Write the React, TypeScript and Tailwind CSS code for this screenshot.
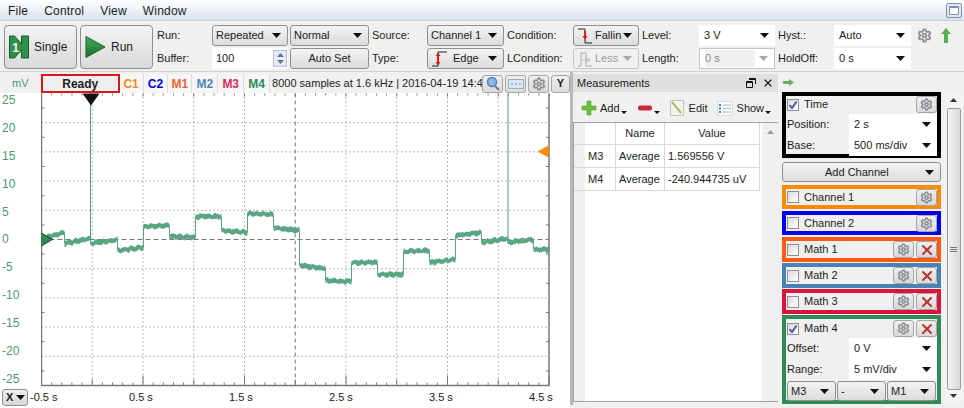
import { Settings, X as XIcon } from "lucide-react";
import type { ReactNode } from "react";

const font = "font-['Liberation_Sans',Arial,sans-serif]";

function Arrow({ light }: { light?: boolean }) {
  return (
    <svg width="9" height="5" viewBox="0 0 9 5" className="shrink-0">
      <path d="M0 0h9L4.5 5z" fill={light ? "#a8a8a8" : "#111"} />
    </svg>
  );
}

// raised windows style combo
function Combo({ children, className = "h-[21px]" }: { children: ReactNode; className?: string }) {
  return (
    <div className={`flex items-center justify-between rounded-[3px] border border-[#8e8f8f] bg-gradient-to-b from-[#f3f3f3] to-[#dcdcdc] pl-[2px] pr-[6px] ${className}`}>
      <span className="flex items-center gap-[2px] whitespace-nowrap pl-[1px]">{children}</span>
      <Arrow />
    </div>
  );
}

// flat editable combo
function Field({ children, disabled }: { children: ReactNode; disabled?: boolean }) {
  return (
    <div className={`flex h-[21px] items-center justify-between bg-white pl-[5px] pr-[6px] ${disabled ? "border border-[#c4c4c4] text-[#8a8a8a]" : ""}`}>
      <span className={disabled ? "h-[17px] w-[50px] bg-[#f0f0f0] leading-[17px]" : ""}>{children}</span>
      <Arrow light={disabled} />
    </div>
  );
}

function Labels({ a, b, w, className = "" }: { a: string; b: string; w: string; className?: string }) {
  return (
    <div className={`flex flex-col gap-[2px] ${w} ${className}`}>
      <div className="flex h-[21px] items-center">{a}</div>
      <div className="flex h-[21px] items-center">{b}</div>
    </div>
  );
}

function GearBtn() {
  return (
    <div className="flex h-[17px] w-[21px] items-center justify-center rounded-[3px] border border-[#a5a5a5] bg-gradient-to-b from-[#efefef] to-[#d8d8d8]">
      <Settings size={13} strokeWidth={3} className="text-[#8b9096]" />
    </div>
  );
}

function CloseBtn() {
  return (
    <div className="flex h-[17px] w-[21px] items-center justify-center rounded-[3px] border border-[#a5a5a5] bg-gradient-to-b from-[#efefef] to-[#d8d8d8]">
      <XIcon size={16} strokeWidth={3} className="text-[#b8342c]" />
    </div>
  );
}

function Check({ on }: { on?: boolean }) {
  return (
    <div className="flex h-[12px] w-[12px] shrink-0 items-center justify-center border border-[#8e8f8f] bg-gradient-to-br from-[#dcdcdc] to-white">
      {on && (
        <svg width="10" height="10" viewBox="0 0 10 10">
          <path d="M1.5 5l2.5 3L8.5 1.5" stroke="#3b4fa8" strokeWidth="1.8" fill="none" />
        </svg>
      )}
    </div>
  );
}

function ChannelBox({ name, color, close, className = "h-[24px]" }: { name: string; color: string; close?: boolean; className?: string }) {
  return (
    <div className={`flex items-center border-[4px] bg-[#f0f0f0] pl-[1px] ${color} ${className}`}>
      <Check />
      <span className="ml-[5px] grow">{name}</span>
      <GearBtn />
      {close && <span className="ml-[2px]"><CloseBtn /></span>}
    </div>
  );
}

function rng(seed: number) {
  let s = seed;
  return () => {
    s = (s * 16807) % 2147483647;
    return s / 2147483647;
  };
}

// x start, x end, y start, y end (in page px)
const levels = [
  [42, 64, 238, 232], [64, 90, 243, 238], [90, 117, 243, 239], [117, 143, 250, 247],
  [143, 169, 226, 225], [169, 195, 236, 237], [195, 221, 216, 216], [221, 247, 230, 232],
  [247, 273, 213, 214], [273, 299, 227, 230], [299, 325, 265, 268], [325, 351, 280, 281],
  [351, 377, 262, 262], [377, 403, 274, 274], [403, 429, 251, 250], [429, 455, 262, 259],
  [455, 481, 235, 232], [481, 507, 242, 238], [507, 533, 242, 239], [533, 549, 249, 249],
];

// noisy band for each level, joined by thin vertical steps
function traceBands() {
  const r = rng(4711);
  let bands = "";
  let steps = "";
  levels.forEach(([x0, x1, y0, y1], i) => {
    const top: string[] = [];
    const bottom: string[] = [];
    for (let x = x0; x <= x1; x += 1) {
      const y = y0 + ((y1 - y0) * (x - x0)) / (x1 - x0) + Math.sin(x * 0.9) * 0.6 - 93;
      top.push(`${x - 41} ${(y - 1.7 - r() * 1.6).toFixed(2)}`);
      bottom.unshift(`${x - 41} ${(y + 1.7 + r() * 1.6).toFixed(2)}`);
    }
    bands += `M${top.join("L")}L${bottom.join("L")}Z`;
    const next = levels[i + 1];
    if (next) steps += `M${x1 - 41} ${y1 - 93}V${next[2] - 93}`;
  });
  return { bands, steps };
}

function Plot() {
  const W = 507.5;
  const H = 292;
  const stepX = W / 10;
  const stepY = H / 10;
  const gridX = Array.from({ length: 9 }, (_, i) => (i + 1) * stepX);
  const gridY = Array.from({ length: 9 }, (_, i) => (i + 1) * stepY);
  const minor = Array.from({ length: 51 }, (_, i) => (i * W) / 50);
  const halfY = Array.from({ length: 10 }, (_, i) => (i + 0.5) * stepY);
  const { bands, steps } = traceBands();
  return (
    <svg width="510" height="294" viewBox="0 0 510 294" className="block">
      <g transform="translate(0.5 0.5)">
        {gridX.map((x, i) => (
          <line key={x} x1={x} x2={x} y1="0" y2={H} stroke="#777" strokeDasharray={i === 4 ? "4 3" : "1 3"} />
        ))}
        {gridY.map((y, i) => (
          <line key={y} x1="0" x2={W} y1={y} y2={y} stroke="#777" strokeDasharray={i === 4 ? "5 3" : "1 3"} />
        ))}
        {minor.map((x, i) => {
          const len = i % 10 === 0 ? 10 : i % 5 === 0 ? 6 : 3;
          return (
            <g key={x} stroke="#777">
              <line x1={x} x2={x} y1="0" y2={i % 5 === 0 ? 3 : 2} />
              <line x1={x} x2={x} y1={H} y2={H - len} />
            </g>
          );
        })}
        {halfY.map((y) => (
          <g key={y} stroke="#777">
            <line x1="0" x2="3" y1={y} y2={y} />
            <line x1={W} x2={W - 3} y1={y} y2={y} />
          </g>
        ))}
        <path d={`M0 0V${H}H${W}V0`} fill="none" stroke="#777" strokeWidth="1.5" />
        <path d={bands} fill="#5aa583" />
        <path d={steps} fill="none" stroke="#5aa583" strokeWidth="1" />
        <path d="M49 0V147M466.5 0V147" stroke="#4f9c7c" strokeWidth="1" fill="none" />
        <path d="M41 0h17l-8.5 12z" fill="#111" />
        <path d="M-1 139l12 7-12 7z" fill="#2e8b57" stroke="#111" strokeWidth="0.7" />
        <path d="M507 52l-11 6 11 6z" fill="#ff8c00" />
      </g>
    </svg>
  );
}

const tabs = [
  ["C1", "text-[#f08c1a]", "w-[24px]"],
  ["C2", "text-[#0000e0]", "w-[25px]"],
  ["M1", "text-[#f0642d]", "w-[24px]"],
  ["M2", "text-[#4e88b8]", "w-[26px]"],
  ["M3", "text-[#d62f58]", "w-[26px]"],
  ["M4", "text-[#2e8b57]", "w-[26px]"],
];

function TinyBtn({ children, w = "w-[21px]" }: { children: ReactNode; w?: string }) {
  return (
    <div className={`flex h-[18px] items-center justify-center rounded-[3px] border border-[#a5a5a5] bg-gradient-to-b from-[#f0f0f0] to-[#dadada] ${w}`}>
      {children}
    </div>
  );
}

const Caret = () => (
  <span className="ml-[1px] mt-[9px]">
    <svg width="6" height="3" className="block"><path d="M0 0h6L3 3z" fill="#111" /></svg>
  </span>
);

export default function App() {
  return (
    <div className={`flex h-[408px] w-[964px] flex-col overflow-hidden bg-[#f0f0f0] text-[11px] leading-none text-[#1c1c1c] ${font}`}>
      {/* menu */}
      <div className="flex h-[21px] items-center justify-between border-b border-[#c9cdd4] bg-gradient-to-b from-white to-[#d9e2f0] pl-[8px] pr-[2px] text-[12px] tracking-[0.2px]">
        <div className="flex gap-[16px] pt-[2px]">
          <span>File</span>
          <span>Control</span>
          <span>View</span>
          <span>Window</span>
        </div>
        <div className="flex h-[15px] w-[16px] items-start justify-center rounded-[2px] border border-[#7f93b0] bg-[#dfe8f4] p-[2px]">
          <div className="h-full w-full rounded-[1px] border border-t-[2px] border-[#7f93b0] bg-white" />
        </div>
      </div>

      {/* toolbar */}
      <div className="flex h-[51px] border-b border-[#d0d0d0] pl-[4px] pt-[4px]">
        <div className="flex h-[44px] w-[73px] items-center gap-[5px] rounded-[4px] border border-[#8e8f8f] bg-gradient-to-b from-[#f3f3f3] to-[#d9d9d9] pl-[4px] text-[12px]">
          <svg width="20" height="24" viewBox="0 0 20 24">
            <path d="M.5 1h5l7 8V1h7v22h-7v-8l-7 8h-5z" fill="#2f8f4c" stroke="#1d5b33" />
            <text x="3" y="17" fontSize="13" fontWeight="700" fill="#f2f2d8">1</text>
          </svg>
          <span>Single</span>
        </div>
        <div className="ml-[3px] flex h-[44px] w-[73px] items-center gap-[5px] rounded-[4px] border border-[#8e8f8f] bg-gradient-to-b from-[#f3f3f3] to-[#d9d9d9] pl-[4px] text-[12px]">
          <svg width="21" height="24" viewBox="0 0 22 24">
            <defs>
              <linearGradient id="run" x1="0" y1="0" x2="0" y2="1">
                <stop offset="0" stopColor="#46ad5a" />
                <stop offset="1" stopColor="#16702f" />
              </linearGradient>
            </defs>
            <path d="M1 1l20 11L1 23z" fill="url(#run)" stroke="#1d5b33" />
          </svg>
          <span>Run</span>
        </div>
        <Labels a="Run:" b="Buffer:" w="w-[55px]" className="ml-[4px]" />
        <div className="flex w-[76px] flex-col gap-[2px]">
          <Combo>Repeated</Combo>
          <div className="flex h-[21px] items-center justify-between bg-white pl-[4px] pr-[1px]">
            100
            <div className="flex h-[17px] w-[14px] flex-col items-center justify-around border border-[#b8c0cc] bg-[#e8ecf2]">
              <svg width="7" height="4"><path d="M0 4L3.5 0 7 4z" fill="#5f7390" /></svg>
              <svg width="7" height="4"><path d="M0 0l3.5 4L7 0z" fill="#5f7390" /></svg>
            </div>
          </div>
        </div>
        <div className="ml-[2px] flex w-[79px] flex-col gap-[2px]">
          <Combo>Normal</Combo>
          <div className="flex h-[21px] items-center justify-center rounded-[3px] border border-[#8e8f8f] bg-gradient-to-b from-[#f3f3f3] to-[#dcdcdc]">Auto Set</div>
        </div>
        <Labels a="Source:" b="Type:" w="w-[55px]" className="ml-[3px]" />
        <div className="flex w-[77px] flex-col gap-[2px]">
          <Combo>Channel 1</Combo>
          <Combo>
            <svg width="18" height="16" viewBox="0 0 18 16" className="mr-[2px]">
              <path d="M1 15h6V1h9" stroke="#222" fill="none" />
              <path d="M7 3v10" stroke="#e01818" strokeWidth="2" />
              <path d="M4.5 5L7 1.5 9.500 5zM4.500 11L7 14.500 9.500 11z" fill="#e01818" />
            </svg>
            Edge
          </Combo>
        </div>
        <Labels a="Condition:" b="LCondition:" w="w-[66px]" className="ml-[3px]" />
        <div className="flex w-[66px] flex-col gap-[2px]">
          <Combo>
            <svg width="16" height="16" viewBox="0 0 16 16">
              <path d="M1 1h7v14h7" stroke="#222" fill="none" />
              <path d="M8 3v6" stroke="#e01818" strokeWidth="2" />
              <path d="M5.500 8L8 12l2.500-4z" fill="#e01818" />
            </svg>
            Fallin
          </Combo>
          <div className="flex h-[21px] items-center justify-between rounded-[3px] border border-[#c4c4c4] bg-[#f0f0f0] pl-[3px] pr-[6px] text-[#9a9a9a]">
            <span className="flex items-center gap-[2px]">
              <svg width="16" height="16" viewBox="0 0 16 16">
                <path d="M1 15h3V2h5v13h6" stroke="#aaa" fill="none" />
                <path d="M5 9h8M10 7l3 2-3 2" stroke="#bbb" fill="none" />
              </svg>
              Less
            </span>
            <Arrow light />
          </div>
        </div>
        <Labels a="Level:" b="Length:" w="w-[57px]" className="ml-[3px]" />
        <div className="flex w-[76px] flex-col gap-[2px]">
          <Field>3 V</Field>
          <Field disabled>0 s</Field>
        </div>
        <Labels a="Hyst.:" b="HoldOff:" w="w-[56px]" className="ml-[3px]" />
        <div className="flex w-[77px] flex-col gap-[2px]">
          <Field>Auto</Field>
          <Field>0 s</Field>
        </div>
        <div className="ml-[6px] flex h-[21px] items-center gap-[9px]">
          <Settings size={15} strokeWidth={3} className="text-[#8b9096]" />
          <svg width="10" height="15" viewBox="0 0 10 15">
            <path d="M5 0l5 6H7v9H3V6H0z" fill="#55b04f" />
          </svg>
        </div>
      </div>

      {/* body */}
      <div className="flex min-h-0 grow">
        {/* plot column */}
        <div className="flex w-[570px] shrink-0 flex-col bg-white">
          <div className="flex h-[21px] items-center bg-[#f0f0f0] pt-[2px]">
            <div className="w-[41px] pl-[12px] text-[#4d9a72]">mV</div>
            <div className="flex h-[19px] w-[79px] items-center justify-center border-[2px] border-[#d81818] bg-[#efefef] text-[12px] font-bold">Ready</div>
            {tabs.map(([t, c, w]) => (
              <div key={t} className={`flex h-[19px] items-center justify-center border-r border-[#dcdcdc] bg-[#f6f6f6] text-[12px] font-bold ${c} ${w}`}>{t}</div>
            ))}
            <div className="ml-[2px] w-[210px] shrink-0 whitespace-nowrap">8000 samples at 1.6 kHz | 2016-04-19 14:4</div>
            <TinyBtn>
              <svg width="16" height="16" viewBox="0 0 16 16">
                <circle cx="7" cy="6" r="4.500" fill="#8db7e8" stroke="#4f80bb" strokeWidth="1.500" />
                <path d="M10 10l4 4" stroke="#6b7c92" strokeWidth="2" />
              </svg>
            </TinyBtn>
            <span className="ml-[2px]">
              <TinyBtn>
                <svg width="16" height="10" viewBox="0 0 16 10">
                  <rect x="0.500" y="0.500" width="15" height="9" fill="#dbe6f2" stroke="#9aaec6" />
                  <path d="M3 5h2M7 5h2M11 5h2" stroke="#7390b5" />
                </svg>
              </TinyBtn>
            </span>
            <span className="ml-[2px]">
              <TinyBtn>
                <Settings size={14} strokeWidth={3} className="text-[#8b9096]" />
              </TinyBtn>
            </span>
            <span className="ml-[2px]">
              <TinyBtn w="w-[19px]"><b>Y</b></TinyBtn>
            </span>
          </div>
          <div className="flex h-[294px] bg-white">
            <div className="flex w-[41px] shrink-0 flex-col justify-between pb-[2px] pl-[2px] pt-[1px] text-[12px] text-[#4d9a72]">
              {["25", "20", "15", "10", "5", "0", "-5", "-10", "-15", "-20", "-25"].map((v) => (
                <span key={v} className="flex h-[12px] items-center">{v}</span>
              ))}
            </div>
            <Plot />
          </div>
          <div className="flex h-[21px] items-center">
            <div className="ml-[2px] flex h-[17px] w-[26px] items-center justify-between rounded-[3px] border border-[#8e8f8f] bg-gradient-to-b from-[#f0f0f0] to-[#d8d8d8] pl-[3px] pr-[2px]">
              <b>X</b>
              <Arrow />
            </div>
            <span className="ml-[2px] w-[99px] shrink-0">-0.5 s</span>
            {["0.5 s", "1.5 s", "2.5 s", "3.5 s"].map((t) => (
              <span key={t} className="w-[100px] shrink-0">{t}</span>
            ))}
            <span>4.5 s</span>
          </div>
        </div>

        {/* measurements */}
        <div className="flex h-[333px] w-[208px] shrink-0 flex-col border-l-[3px] border-[#b8b8b8] pb-[3px] pt-[2px]">
          <div className="flex h-[18px] shrink-0 items-center justify-between bg-[#dfdfdf] pl-[4px] pr-[4px]">
            <span>Measurements</span>
            <span className="flex items-center gap-[6px]">
              <svg width="10" height="10" viewBox="0 0 10 10">
                <path d="M3 .5h6.500V6M.5 3.500h6v6h-6zM.5 4.500h6M3 1.500h6.500" stroke="#111" fill="none" />
              </svg>
              <XIcon size={12} strokeWidth={2.5} />
            </span>
          </div>
          <div className="flex h-[30px] shrink-0 items-center pl-[8px] pt-[2px]">
            <svg width="16" height="16" viewBox="0 0 16 16">
              <path d="M6 1h4v5h5v4h-5v5H6v-5H1V6h5z" fill="#6cbf3e" stroke="#4c9a2a" strokeWidth="0.500" />
            </svg>
            <span className="ml-[3px]">Add</span>
            <Caret />
            <svg width="16" height="8" viewBox="0 0 16 8" className="ml-[10px]">
              <rect x="1" y="1.500" width="14" height="5" rx="2" fill="#c92a3a" />
            </svg>
            <Caret />
            <svg width="14" height="16" viewBox="0 0 14 16" className="ml-[10px]">
              <rect x="0.500" y="0.500" width="13" height="15" fill="#f3f3f0" stroke="#c4c4bf" />
              <path d="M2 2l9 11" stroke="#b0b66a" strokeWidth="2" />
            </svg>
            <span className="ml-[5px]">Edit</span>
            <svg width="16" height="15" viewBox="0 0 16 15" className="ml-[9px]">
              <rect x="0.500" y="0.500" width="15" height="14" fill="#f7f9fc" stroke="#d6dde6" />
              <path d="M2 4h2M2 7.500h2M2 11h2" stroke="#3b86d1" strokeWidth="2" />
              <path d="M6 4h8M6 7.500h8M6 11h8" stroke="#b6bec8" />
            </svg>
            <span className="ml-[4px]">Show</span>
            <Caret />
          </div>
          <div className="flex min-h-0 grow border-y border-l border-[#a0a0a0] bg-white">
            <div className="flex min-w-0 grow">
              <div className="w-[11px] shrink-0 bg-[#f0f0f0]">
                <div className="h-[22px] border-b border-[#d8d8d8]" />
                <div className="h-[23px] border-b border-[#d8d8d8]" />
                <div className="h-[23px] border-b border-[#d8d8d8]" />
              </div>
              <div className="grid h-fit grid-cols-[31px_49px_95px] grid-rows-[22px_23px_23px]">
                <div className="border-b border-r border-[#d8d8d8]" />
                <div className="flex items-center justify-center border-b border-r border-[#d8d8d8]">Name</div>
                <div className="flex items-center justify-center border-b border-r border-[#d8d8d8]">Value</div>
                <div className="flex items-center border-b border-r border-[#d8d8d8] pl-[3px]">M3</div>
                <div className="flex items-center border-b border-r border-[#d8d8d8] pl-[3px]">Average</div>
                <div className="flex items-center border-b border-r border-[#d8d8d8] pl-[3px]">1.569556 V</div>
                <div className="flex items-center border-b border-r border-[#d8d8d8] pl-[3px]">M4</div>
                <div className="flex items-center border-b border-r border-[#d8d8d8] pl-[3px]">Average</div>
                <div className="flex items-center border-b border-r border-[#d8d8d8] pl-[3px]">-240.944735 uV</div>
              </div>
            </div>
            <div className="flex w-[16px] shrink-0 flex-col items-center bg-[#f0f0f0] pt-[7px]">
              <svg width="7" height="4"><path d="M0 4L3.500 0 7 4z" fill="#9a9a9a" /></svg>
            </div>
          </div>
        </div>

        {/* channel panel */}
        <div className="flex min-w-0 grow flex-col pb-[4px]">
          <div className="flex h-[20px] shrink-0 items-center pl-[5px]">
            <svg width="11" height="7" viewBox="0 0 11 7">
              <path d="M0 2h6V0l5 3.500L6 7V5H0z" fill="#63b05a" />
            </svg>
          </div>
          <div className="flex min-h-0 grow">
            <div className="ml-[4px] flex w-[159px] shrink-0 flex-col">
              <div className="flex h-[66px] flex-col gap-[1px] border-[4px] border-black pl-[1px]">
                <div className="flex h-[20px] items-center">
                  <Check on />
                  <span className="ml-[5px] grow">Time</span>
                  <GearBtn />
                </div>
                <div className="flex h-[20px] items-center justify-between">
                  <span>Position:</span>
                  <div className="w-[88px]"><Field>2 s</Field></div>
                </div>
                <div className="flex h-[20px] items-center justify-between">
                  <span>Base:</span>
                  <div className="w-[88px]"><Field>500 ms/div</Field></div>
                </div>
              </div>
              <div className="mb-[3px] mt-[4px] flex h-[20px] items-center justify-between rounded-[3px] border border-[#8e8f8f] bg-gradient-to-b from-[#f3f3f3] to-[#dcdcdc] pl-[42px] pr-[6px]">
                Add Channel
                <Arrow />
              </div>
              <ChannelBox name="Channel 1" color="border-[#ff8c00]" />
              <ChannelBox name="Channel 2" color="border-[#0000e6]" className="mt-[2px] h-[24px]" />
              <ChannelBox name="Math 1" color="border-[#ff5a14]" close className="mt-[2px] h-[25px]" />
              <ChannelBox name="Math 2" color="border-[#4682b4]" close className="mt-[1px] h-[25px]" />
              <ChannelBox name="Math 3" color="border-[#dc143c]" close className="mt-[1px] h-[25px]" />
              <div className="mt-[1px] flex h-[89px] flex-col border-[4px] border-[#2e8b57] bg-[#f0f0f0] pl-[1px]">
                <div className="flex h-[19px] shrink-0 items-center">
                  <Check on />
                  <span className="ml-[5px] grow">Math 4</span>
                  <GearBtn />
                  <span className="ml-[2px]"><CloseBtn /></span>
                </div>
                <div className="flex h-[21px] shrink-0 items-center justify-between">
                  <span>Offset:</span>
                  <div className="w-[88px]"><Field>0 V</Field></div>
                </div>
                <div className="flex h-[21px] shrink-0 items-center justify-between">
                  <span>Range:</span>
                  <div className="w-[88px]"><Field>5 mV/div</Field></div>
                </div>
                <div className="mt-[1px] grid grid-cols-[49px_49px_49px] gap-[1px]">
                  <Combo className="h-[20px]">M3</Combo>
                  <Combo className="h-[20px]">-</Combo>
                  <Combo className="h-[20px]">M1</Combo>
                </div>
              </div>
            </div>
            <div className="ml-[4px] flex w-[17px] flex-col items-center bg-[#f3f3f3]">
              <svg width="7" height="4" className="mt-[6px]"><path d="M0 4L3.500 0 7 4z" fill="#333" /></svg>
              <div className="mb-[4px] mt-[6px] flex w-[14px] grow items-center justify-center rounded-[2px] border border-[#9a9a9a] bg-gradient-to-r from-[#f4f4f4] to-[#d8d8d8]">
                <div className="flex flex-col gap-[1px]">
                  <div className="h-px w-[7px] bg-[#777]" />
                  <div className="h-px w-[7px] bg-[#777]" />
                  <div className="h-px w-[7px] bg-[#777]" />
                </div>
              </div>
              <svg width="7" height="4" className="mb-[6px]"><path d="M0 0h7L3.500 4z" fill="#333" /></svg>
            </div>
          </div>
        </div>
      </div>
    </div>
  );
}
